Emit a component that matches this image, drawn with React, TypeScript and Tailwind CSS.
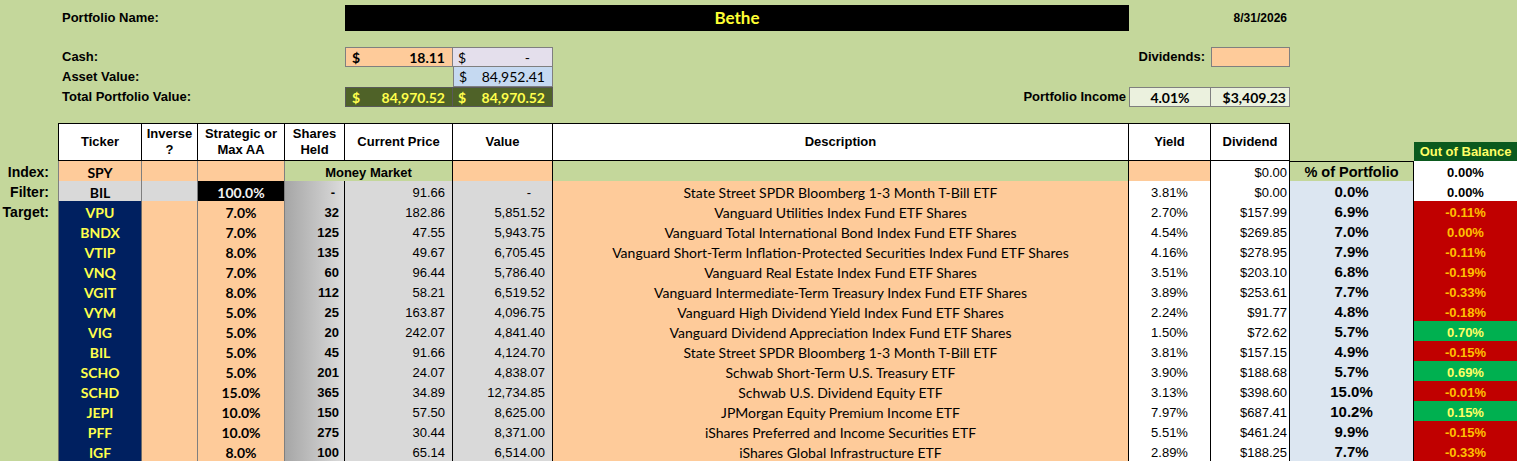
const GRID =
  'grid grid-cols-[58px_84px_56px_87px_60px_108px_100px_576px_82px_79px_124px_103px]';
const CAL = "font-['Lato','Liberation_Sans',sans-serif]";

const holdings = [
  ['VPU', '7.0%', '32', '182.86', '5,851.52', 'Vanguard Utilities Index Fund ETF Shares', '2.70%', '$157.99', '6.9%', '-0.11%'],
  ['BNDX', '7.0%', '125', '47.55', '5,943.75', 'Vanguard Total International Bond Index Fund ETF Shares', '4.54%', '$269.85', '7.0%', '0.00%'],
  ['VTIP', '8.0%', '135', '49.67', '6,705.45', 'Vanguard Short-Term Inflation-Protected Securities Index Fund ETF Shares', '4.16%', '$278.95', '7.9%', '-0.11%'],
  ['VNQ', '7.0%', '60', '96.44', '5,786.40', 'Vanguard Real Estate Index Fund ETF Shares', '3.51%', '$203.10', '6.8%', '-0.19%'],
  ['VGIT', '8.0%', '112', '58.21', '6,519.52', 'Vanguard Intermediate-Term Treasury Index Fund ETF Shares', '3.89%', '$253.61', '7.7%', '-0.33%'],
  ['VYM', '5.0%', '25', '163.87', '4,096.75', 'Vanguard High Dividend Yield Index Fund ETF Shares', '2.24%', '$91.77', '4.8%', '-0.18%'],
  ['VIG', '5.0%', '20', '242.07', '4,841.40', 'Vanguard Dividend Appreciation Index Fund ETF Shares', '1.50%', '$72.62', '5.7%', '0.70%'],
  ['BIL', '5.0%', '45', '91.66', '4,124.70', 'State Street SPDR Bloomberg 1-3 Month T-Bill ETF', '3.81%', '$157.15', '4.9%', '-0.15%'],
  ['SCHO', '5.0%', '201', '24.07', '4,838.07', 'Schwab Short-Term U.S. Treasury ETF', '3.90%', '$188.68', '5.7%', '0.69%'],
  ['SCHD', '15.0%', '365', '34.89', '12,734.85', 'Schwab U.S. Dividend Equity ETF', '3.13%', '$398.60', '15.0%', '-0.01%'],
  ['JEPI', '10.0%', '150', '57.50', '8,625.00', 'JPMorgan Equity Premium Income ETF', '7.97%', '$687.41', '10.2%', '0.15%'],
  ['PFF', '10.0%', '275', '30.44', '8,371.00', 'iShares Preferred and Income Securities ETF', '5.51%', '$461.24', '9.9%', '-0.15%'],
  ['IGF', '8.0%', '100', '65.14', '6,514.00', 'iShares Global Infrastructure ETF', '2.89%', '$188.25', '7.7%', '-0.33%'],
];

// cells that are over target get the green fill, the rest red
const overTarget = ['VIG', 'SCHO', 'JEPI'];

export default function App() {
  return (
    <div className="w-[1517px] h-[461px] overflow-hidden bg-[#c4d79b] text-black font-['Liberation_Sans',Arial,sans-serif]">
      {/* Portfolio name */}
      <div className={`${GRID} h-[26px] mt-[5px]`}>
        <div className="col-start-2 col-span-3 flex items-center pl-[4px] text-[13px] font-bold">Portfolio Name:</div>
        <div className={`col-start-6 col-span-3 bg-black flex items-center justify-center text-[17px] font-bold text-[#ffff33] ${CAL}`}>
          Bethe
        </div>
        <div className="col-start-10 flex items-center justify-end pr-[3px] text-[12px] font-bold">8/31/2026</div>
      </div>

      {/* Cash / asset / totals */}
      <div className={`${GRID} grid-rows-[20px_20px_20px] mt-[16px] text-[13px]`}>
        <div className="col-start-2 col-span-3 flex items-center pl-[4px] font-bold">Cash:</div>
        <div className={`col-start-6 bg-[#fecb9a] border border-[#7f7f7f] flex items-center justify-between pl-[6px] pr-[7px] font-bold text-[14px] ${CAL}`}>
          <span>$</span>
          <span>18.11</span>
        </div>
        <div className={`bg-[#e4dfec] border-t border-r border-b border-[#7f7f7f] flex items-center justify-between pl-[5px] pr-[22px] text-[14px] ${CAL}`}>
          <span>$</span>
          <span>-</span>
        </div>
        <div className="col-start-8 col-span-2 flex items-center justify-end pr-[6px] font-bold">Dividends:</div>
        <div className="col-start-10 bg-[#fecb9a] border border-[#7f7f7f]" />

        <div className="col-start-2 col-span-3 flex items-center pl-[4px] font-bold">Asset Value:</div>
        <div className={`col-start-7 bg-[#c5d9f1] border-l border-r border-b border-[#7f7f7f] flex items-center justify-between pl-[5px] pr-[7px] text-[14px] ${CAL}`}>
          <span>$</span>
          <span>84,952.41</span>
        </div>

        <div className="col-start-2 col-span-3 flex items-center pl-[4px] font-bold">Total Portfolio Value:</div>
        <div className={`col-start-6 bg-[#4f6228] border border-[#595959] flex items-center justify-between pl-[6px] pr-[7px] text-[14px] font-bold text-[#ffff4d] ${CAL}`}>
          <span>$</span>
          <span>84,970.52</span>
        </div>
        <div className={`bg-[#4f6228] border-t border-r border-b border-[#595959] flex items-center justify-between pl-[5px] pr-[7px] text-[14px] font-bold text-[#ffff4d] ${CAL}`}>
          <span>$</span>
          <span>84,970.52</span>
        </div>
        <div className="flex items-center justify-end pr-[3px] font-bold">Portfolio Income</div>
        <div className={`bg-[#ebf1de] border border-[#7f7f7f] flex items-center justify-center text-[14px] font-bold ${CAL}`}>4.01%</div>
        <div className={`bg-[#ebf1de] border-t border-r border-b border-[#7f7f7f] flex items-center justify-end pr-[3px] text-[14px] font-bold ${CAL}`}>
          $3,409.23
        </div>
      </div>

      {/* Header */}
      <div className={`${GRID} h-[38px] mt-[16px] text-[13px] font-bold leading-[16px]`}>
        <div />
        <div className="bg-white border border-black flex items-center justify-center">Ticker</div>
        <div className="bg-white border-t border-r border-b border-black flex flex-col items-center justify-center text-center">
          <span>Inverse</span>
          <span>?</span>
        </div>
        <div className="bg-white border-t border-r border-b border-black flex flex-col items-center justify-center text-center">
          <span>Strategic or</span>
          <span>Max AA</span>
        </div>
        <div className="bg-white border-t border-r border-b border-black flex flex-col items-center justify-center text-center">
          <span>Shares</span>
          <span>Held</span>
        </div>
        <div className="bg-white border-t border-r border-b border-black flex items-center justify-center">Current Price</div>
        <div className="bg-white border-t border-r border-b border-black flex items-center justify-center">Value</div>
        <div className="bg-white border-t border-r border-b border-black flex items-center justify-center">Description</div>
        <div className="bg-white border-t border-r border-b border-black flex items-center justify-center">Yield</div>
        <div className="bg-white border-t border-r border-b border-black flex items-center justify-center">Dividend</div>
        <div />
        <div className="flex flex-col justify-end">
          <div className="h-[19px] bg-[#0b5a1e] flex items-center justify-center text-[#ffff66]">Out of Balance</div>
        </div>
      </div>

      {/* Index row */}
      <div className={`${GRID} h-[20px] text-[13px]`}>
        <div className="flex items-center justify-end pr-[9px] text-[14px] font-bold">Index:</div>
        <div className={`bg-[#fecb9a] border-l border-r border-b border-[#7f7f7f] flex items-center justify-center text-[14px] font-bold ${CAL}`}>SPY</div>
        <div className="bg-[#fecb9a] border-r border-b border-[#7f7f7f]" />
        <div className="bg-[#fecb9a] border-r border-b border-[#7f7f7f]" />
        <div className="col-span-2 bg-[#c4d79b] border-r border-b border-black flex items-center justify-center font-bold">Money Market</div>
        <div className="bg-[#fecb9a] border-r border-b border-black" />
        <div className="bg-[#c4d79b] border-r border-b border-black" />
        <div className="bg-[#fecb9a] border-r border-b border-black" />
        <div className="bg-white border-r border-b border-black flex items-center justify-end pr-[2px]">$0.00</div>
        <div className="bg-[#c4d79b] border-t border-r border-b border-black flex items-center justify-center text-[14.5px] font-bold">
          % of Portfolio
        </div>
        <div className="bg-white border-b border-black flex items-center justify-center font-bold">0.00%</div>
      </div>

      {/* Filter row */}
      <div className={`${GRID} h-[20px] text-[13px]`}>
        <div className="flex items-center justify-end pr-[9px] text-[14px] font-bold">Filter:</div>
        <div className={`bg-[#d9d9d9] border-l border-r border-b border-[#7f7f7f] flex items-center justify-center text-[14px] font-bold ${CAL}`}>BIL</div>
        <div className="bg-[#d9d9d9] border-r border-b border-[#7f7f7f]" />
        <div className={`bg-black border-r border-b border-[#7f7f7f] flex items-center justify-center text-[14px] font-bold text-[#f2f2f2] ${CAL}`}>100.0%</div>
        <div className="bg-linear-to-r from-[#a6a6a6] to-[#dcdcdc] border-r border-b border-black flex items-center justify-end pr-[9px] font-bold">-</div>
        <div className="bg-[#d9d9d9] border-r border-b border-black flex items-center justify-end pr-[7px]">91.66</div>
        <div className="bg-[#d9d9d9] border-r border-b border-black flex items-center justify-end pr-[21px]">-</div>
        <div className={`bg-[#fecb9a] border-r border-b border-black flex items-center justify-center text-[14px] ${CAL}`}>
          State Street SPDR Bloomberg 1-3 Month T-Bill ETF
        </div>
        <div className="bg-white border-r border-b border-black flex items-center justify-center">3.81%</div>
        <div className="bg-white border-r border-b border-black flex items-center justify-end pr-[2px]">$0.00</div>
        <div className="bg-[#dce6f1] border-r border-b border-black flex items-center justify-center text-[15px] font-bold">0.0%</div>
        <div className="bg-white border-b border-black flex items-center justify-center font-bold">0.00%</div>
      </div>

      {/* Target rows */}
      {holdings.map(([ticker, aa, shares, price, value, desc, yld, div, pct, oob], i) => (
        <div key={ticker + i} className={`${GRID} h-[20px] text-[13px]`}>
          <div className="flex items-center justify-end pr-[9px] text-[14px] font-bold">{i === 0 ? 'Target:' : ''}</div>
          <div className={`bg-[#002060] border-l border-r border-b border-[#6b6b6b] flex items-center justify-center text-[14px] font-bold text-[#ffff4d] ${CAL}`}>
            {ticker}
          </div>
          <div className="bg-[#fecb9a] border-r border-b border-[#7f7f7f]" />
          <div className={`bg-[#fecb9a] border-r border-b border-[#7f7f7f] flex items-center justify-center text-[14px] font-bold ${CAL}`}>{aa}</div>
          <div className="bg-linear-to-r from-[#a6a6a6] to-[#dcdcdc] border-r border-b border-black flex items-center justify-end pr-[5px] font-bold">
            {shares}
          </div>
          <div className="bg-[#d9d9d9] border-r border-b border-black flex items-center justify-end pr-[7px]">{price}</div>
          <div className="bg-[#d9d9d9] border-r border-b border-black flex items-center justify-end pr-[7px]">{value}</div>
          <div className={`bg-[#fecb9a] border-r border-b border-black flex items-center justify-center text-[14px] ${CAL}`}>{desc}</div>
          <div className="bg-white border-r border-b border-black flex items-center justify-center">{yld}</div>
          <div className="bg-white border-r border-b border-black flex items-center justify-end pr-[2px]">{div}</div>
          <div className="bg-[#dce6f1] border-r border-b border-black flex items-center justify-center text-[15px] font-bold">{pct}</div>
          {overTarget.includes(ticker) ? (
            <div className="bg-[#00b050] border-b border-black flex items-center justify-center font-bold text-[#ffff66]">{oob}</div>
          ) : (
            <div className="bg-[#c00000] border-b border-black flex items-center justify-center font-bold text-[#ffc000]">{oob}</div>
          )}
        </div>
      ))}
    </div>
  );
}
